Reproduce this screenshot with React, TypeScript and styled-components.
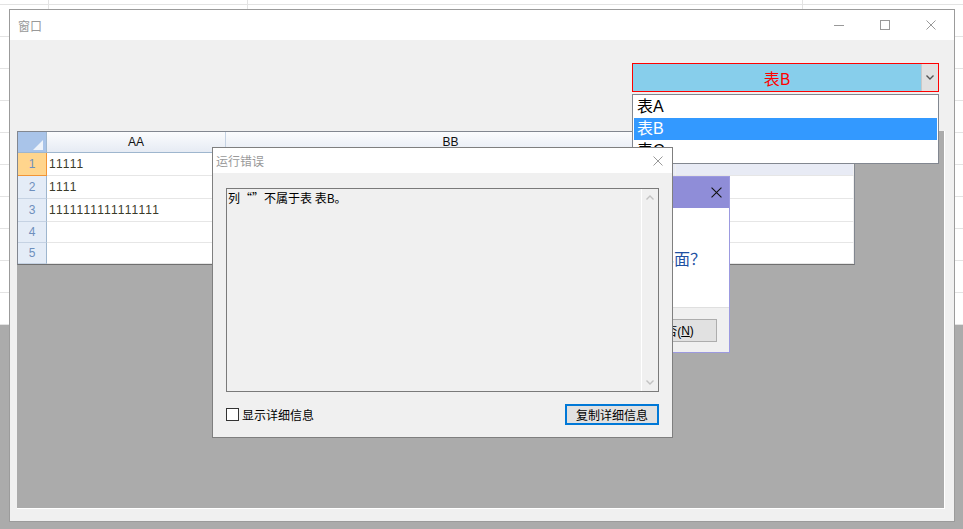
import styled, { createGlobalStyle } from "styled-components";

const GlobalStyle = createGlobalStyle`
  html, body { margin: 0; padding: 0; }
  body {
    font-family: "Liberation Sans", "Noto Sans CJK SC", sans-serif;
    font-size: 12px;
    color: #000;
  }
  * { box-sizing: border-box; }
`;

// the sheet behind the window: white with grid lines at the top, grey below
const Desktop = styled.div`
  position: relative;
  width: 963px;
  height: 529px;
  overflow: hidden;
  padding: 9px 0 0 9px;
  background:
    linear-gradient(to right, transparent 48px, #e3e3e3 48px, #e3e3e3 49px, transparent 49px, transparent 247px, #e3e3e3 247px, #e3e3e3 248px, transparent 248px, transparent 802px, #e3e3e3 802px, #e3e3e3 803px, transparent 803px) top / 100% 325px no-repeat,
    repeating-linear-gradient(to bottom, transparent 0, transparent 4px, #e3e3e3 4px, #e3e3e3 5px, transparent 5px, transparent 32px) top / 100% 325px no-repeat,
    linear-gradient(#fff, #fff) top / 100% 325px no-repeat,
    #ababab;
`;

const Window = styled.div`
  width: 946px;
  height: 513px;
  border: 1px solid #9b9b9b;
  background: #f0f0f0;
  display: flex;
  flex-direction: column;
`;

const TitleBar = styled.div<{ $h: number }>`
  height: ${(p) => p.$h}px;
  flex-shrink: 0;
  background: #fff;
  display: flex;
  align-items: center;
`;

const Title = styled.div<{ $pad: number }>`
  flex: 1;
  padding-left: ${(p) => p.$pad}px;
  color: #999;
  font-size: 12px;
  font-family: "Noto Sans CJK SC", sans-serif;
`;

const CaptionButton = styled.div<{ $w: number }>`
  width: ${(p) => p.$w}px;
  height: 100%;
  display: flex;
  align-items: center;
  justify-content: center;
`;

const Client = styled.div`
  flex: 1;
  display: flex;
  flex-direction: column;
`;

const TopBar = styled.div`
  height: 91px;
  flex-shrink: 0;
  display: flex;
  justify-content: flex-end;
  align-items: flex-start;
  padding: 23px 15px 0 0;
`;

const Combo = styled.div`
  position: relative;
  width: 307px;
  height: 29px;
  border: 1px solid #ff0000;
  background: #87ceeb;
  display: flex;
`;

const ComboText = styled.div`
  flex: 1;
  display: flex;
  align-items: center;
  justify-content: center;
  color: #ff0000;
  font-size: 16px;
  font-family: "Noto Sans CJK SC", sans-serif;
`;

const ComboButton = styled.div`
  width: 17px;
  background: #e1e1e1;
  border-left: 1px solid #c8c8c8;
  display: flex;
  align-items: center;
  justify-content: center;
`;

const DropList = styled.div`
  position: absolute;
  top: 30px;
  left: -1px;
  width: 307px;
  height: 70px;
  border: 1px solid #828790;
  background: #fff;
  overflow: hidden;
  padding-top: 1px;
  z-index: 10;
`;

const DropItem = styled.div<{ $sel?: boolean }>`
  height: 22px;
  line-height: 22px;
  margin: 0 1px;
  padding-left: 3px;
  font-size: 16px;
  font-family: "Liberation Sans", "Noto Sans CJK SC", sans-serif;
  background: ${(p) => (p.$sel ? "#3399ff" : "transparent")};
  color: ${(p) => (p.$sel ? "#fff" : "#000")};
`;

const Mdi = styled.div`
  flex: 1;
  margin: 0 9px 12px 7px;
  background: #ababab;
  border-right: 1px solid #fff;
  border-bottom: 1px solid #fff;
`;

const Grid = styled.div`
  width: 838px;
  border: 1px solid #828790;
  border-bottom-color: #6f6f6f;
  background: #fff;
`;

const GridRow = styled.div<{ $h: number }>`
  display: flex;
  height: ${(p) => p.$h}px;
`;

const HeaderRow = styled.div`
  display: flex;
  height: 21px;
  border-bottom: 1px solid #9eb6ce;
  background: linear-gradient(#fbfcfe, #e6ebf4);
`;

const Corner = styled.div`
  width: 29px;
  background: #a9c4e9;
  border-right: 1px solid #9eb6ce;
`;

const HeadCell = styled.div<{ $w?: number }>`
  ${(p) => (p.$w ? `width: ${p.$w}px;` : "flex: 1;")}
  border-right: 1px solid #c5d2e3;
  display: flex;
  align-items: center;
  justify-content: center;
  color: #111;
  font-size: 12px;
`;

const RowHead = styled.div<{ $cur?: boolean }>`
  width: 29px;
  display: flex;
  align-items: center;
  justify-content: center;
  font-size: 12px;
  color: #6e8fbd;
  background: ${(p) => (p.$cur ? "#ffd58d" : "#e4ecf7")};
  border-right: 1px solid ${(p) => (p.$cur ? "#f29536" : "#9eb6ce")};
  border-bottom: 1px solid ${(p) => (p.$cur ? "#f29536" : "#c5d2e3")};
`;

const Cell = styled.div<{ $w?: number; $tint?: boolean }>`
  ${(p) => (p.$w ? `width: ${p.$w}px;` : "flex: 1;")}
  display: flex;
  align-items: center;
  padding-left: 2px;
  font-size: 12px;
  letter-spacing: 1.1px;
  color: #3a3a28;
  background: ${(p) => (p.$tint ? "#e8ebf5" : "#fff")};
  border-bottom: 1px solid #e6e6e6;
  border-right: 1px solid #f0f0f0;
`;

// error dialog (floating over the MDI area)
const Dialog = styled.div`
  position: absolute;
  left: 212px;
  top: 147px;
  width: 461px;
  height: 291px;
  border: 1px solid #7f7f7f;
  background: #f0f0f0;
  display: flex;
  flex-direction: column;
  z-index: 30;
`;

const DialogBody = styled.div`
  flex: 1;
  padding: 15px 13px 0 13px;
  display: flex;
  flex-direction: column;
`;

const TextBox = styled.div`
  width: 433px;
  height: 204px;
  border: 1px solid #7a7a7a;
  background: #f0f0f0;
  display: flex;
`;

const TextArea = styled.div`
  flex: 1;
  padding: 2px 1px;
  font-size: 12px;
  line-height: 14px;
  font-family: "Noto Sans CJK SC", sans-serif;
  color: #000;
`;

const ScrollBar = styled.div`
  width: 17px;
  border-left: 1px solid #fff;
  display: flex;
  flex-direction: column;
  justify-content: space-between;
  align-items: center;
  padding: 6px 0;
`;

const DialogFooter = styled.div`
  margin-top: 12px;
  display: flex;
  align-items: center;
  justify-content: space-between;
`;

const CheckLabel = styled.label`
  display: flex;
  align-items: center;
  gap: 3px;
  font-size: 12px;
  font-family: "Noto Sans CJK SC", sans-serif;
`;

const CheckBox = styled.span`
  width: 13px;
  height: 13px;
  border: 1px solid #333;
  background: #fff;
`;

const Button = styled.div<{ $w: number; $h: number; $focus?: boolean }>`
  width: ${(p) => p.$w}px;
  height: ${(p) => p.$h}px;
  background: #e1e1e1;
  border: ${(p) => (p.$focus ? "2px solid #0078d7" : "1px solid #adadad")};
  display: flex;
  align-items: center;
  justify-content: center;
  font-size: 12px;
  font-family: "Liberation Sans", "Noto Sans CJK SC", sans-serif;
  color: #000;

  u { text-decoration: underline; }
`;

// message box partly hidden behind the error dialog
const MsgBox = styled.div`
  position: absolute;
  left: 460px;
  top: 176px;
  width: 270px;
  height: 177px;
  border: 1px solid #9c9ae0;
  background: #fff;
  display: flex;
  flex-direction: column;
  z-index: 20;
`;

const MsgTitle = styled.div`
  height: 31px;
  background: #8f8dd8;
  display: flex;
  justify-content: flex-end;
  align-items: center;
  padding-right: 7px;
`;

const MsgText = styled.div`
  flex: 1;
  display: flex;
  align-items: center;
  justify-content: flex-end;
  padding-right: 23px;
  font-size: 16px;
  color: #1e50a2;
  font-family: "Noto Sans CJK SC", sans-serif;
`;

const MsgFooter = styled.div`
  height: 45px;
  background: #f0f0f0;
  border-top: 1px solid #dfdfdf;
  display: flex;
  justify-content: flex-end;
  padding: 11px 12px 0 0;
`;

const X = ({ color, size = 10 }: { color: string; size?: number }) => (
  <svg width={size} height={size} viewBox="0 0 10 10">
    <path d="M0.5 0.5 L9.5 9.5 M9.5 0.5 L0.5 9.5" stroke={color} strokeWidth="1" fill="none" />
  </svg>
);

const Chevron = ({ up, color }: { up?: boolean; color: string }) => (
  <svg width="8" height="5" viewBox="0 0 8 5">
    <polyline
      points={up ? "0.5,4.5 4,1 7.5,4.5" : "0.5,0.5 4,4 7.5,0.5"}
      stroke={color}
      strokeWidth="1.4"
      fill="none"
    />
  </svg>
);

const rows = [
  { n: 1, h: 23, a: "11111" },
  { n: 2, h: 23, a: "1111" },
  { n: 3, h: 23, a: "1111111111111111" },
  { n: 4, h: 21, a: "" },
  { n: 5, h: 21, a: "" },
];

export default function App() {
  return (
    <Desktop>
      <GlobalStyle />
      <Window>
        <TitleBar $h={30}>
          <Title $pad={8}>窗口</Title>
          <CaptionButton $w={46}>
            <svg width="10" height="10" viewBox="0 0 10 10">
              <path d="M0 5.5 H10" stroke="#999" strokeWidth="1" />
            </svg>
          </CaptionButton>
          <CaptionButton $w={46}>
            <svg width="10" height="10" viewBox="0 0 10 10">
              <rect x="0.5" y="0.5" width="9" height="9" stroke="#999" strokeWidth="1" fill="none" />
            </svg>
          </CaptionButton>
          <CaptionButton $w={46}>
            <X color="#999" />
          </CaptionButton>
        </TitleBar>
        <Client>
          <TopBar>
            <Combo>
              <ComboText>表B</ComboText>
              <ComboButton>
                <Chevron color="#555" />
              </ComboButton>
              <DropList>
                <DropItem>表A</DropItem>
                <DropItem $sel>表B</DropItem>
                <DropItem>表C</DropItem>
              </DropList>
            </Combo>
          </TopBar>
          <Mdi>
            <Grid>
              <HeaderRow>
                <Corner>
                  <svg width="28" height="20" viewBox="0 0 28 20">
                    <polygon points="25,8 25,18 15,18" fill="#eef3fa" />
                  </svg>
                </Corner>
                <HeadCell $w={179}>AA</HeadCell>
                <HeadCell $w={450}>BB</HeadCell>
                <HeadCell />
              </HeaderRow>
              {rows.map((r) => (
                <GridRow key={r.n} $h={r.h}>
                  <RowHead $cur={r.n === 1}>{r.n}</RowHead>
                  <Cell $w={179}>{r.a}</Cell>
                  <Cell $w={450} $tint={r.n === 1} />
                  <Cell $tint={r.n === 1} />
                </GridRow>
              ))}
            </Grid>
          </Mdi>
        </Client>
      </Window>

      <MsgBox>
        <MsgTitle>
          <X color="#111" size={11} />
        </MsgTitle>
        <MsgText>是否退出当前界面？</MsgText>
        <MsgFooter>
          <Button $w={75} $h={23}>
            否(<u>N</u>)
          </Button>
        </MsgFooter>
      </MsgBox>

      <Dialog>
        <TitleBar $h={25}>
          <Title $pad={3}>运行错误</Title>
          <CaptionButton $w={29}>
            <X color="#999" />
          </CaptionButton>
        </TitleBar>
        <DialogBody>
          <TextBox>
            <TextArea>列“”不属于表 表B。</TextArea>
            <ScrollBar>
              <Chevron up color="#c2c2c2" />
              <Chevron color="#c2c2c2" />
            </ScrollBar>
          </TextBox>
          <DialogFooter>
            <CheckLabel>
              <CheckBox />
              显示详细信息
            </CheckLabel>
            <Button $w={94} $h={21} $focus>
              复制详细信息
            </Button>
          </DialogFooter>
        </DialogBody>
      </Dialog>
    </Desktop>
  );
}
